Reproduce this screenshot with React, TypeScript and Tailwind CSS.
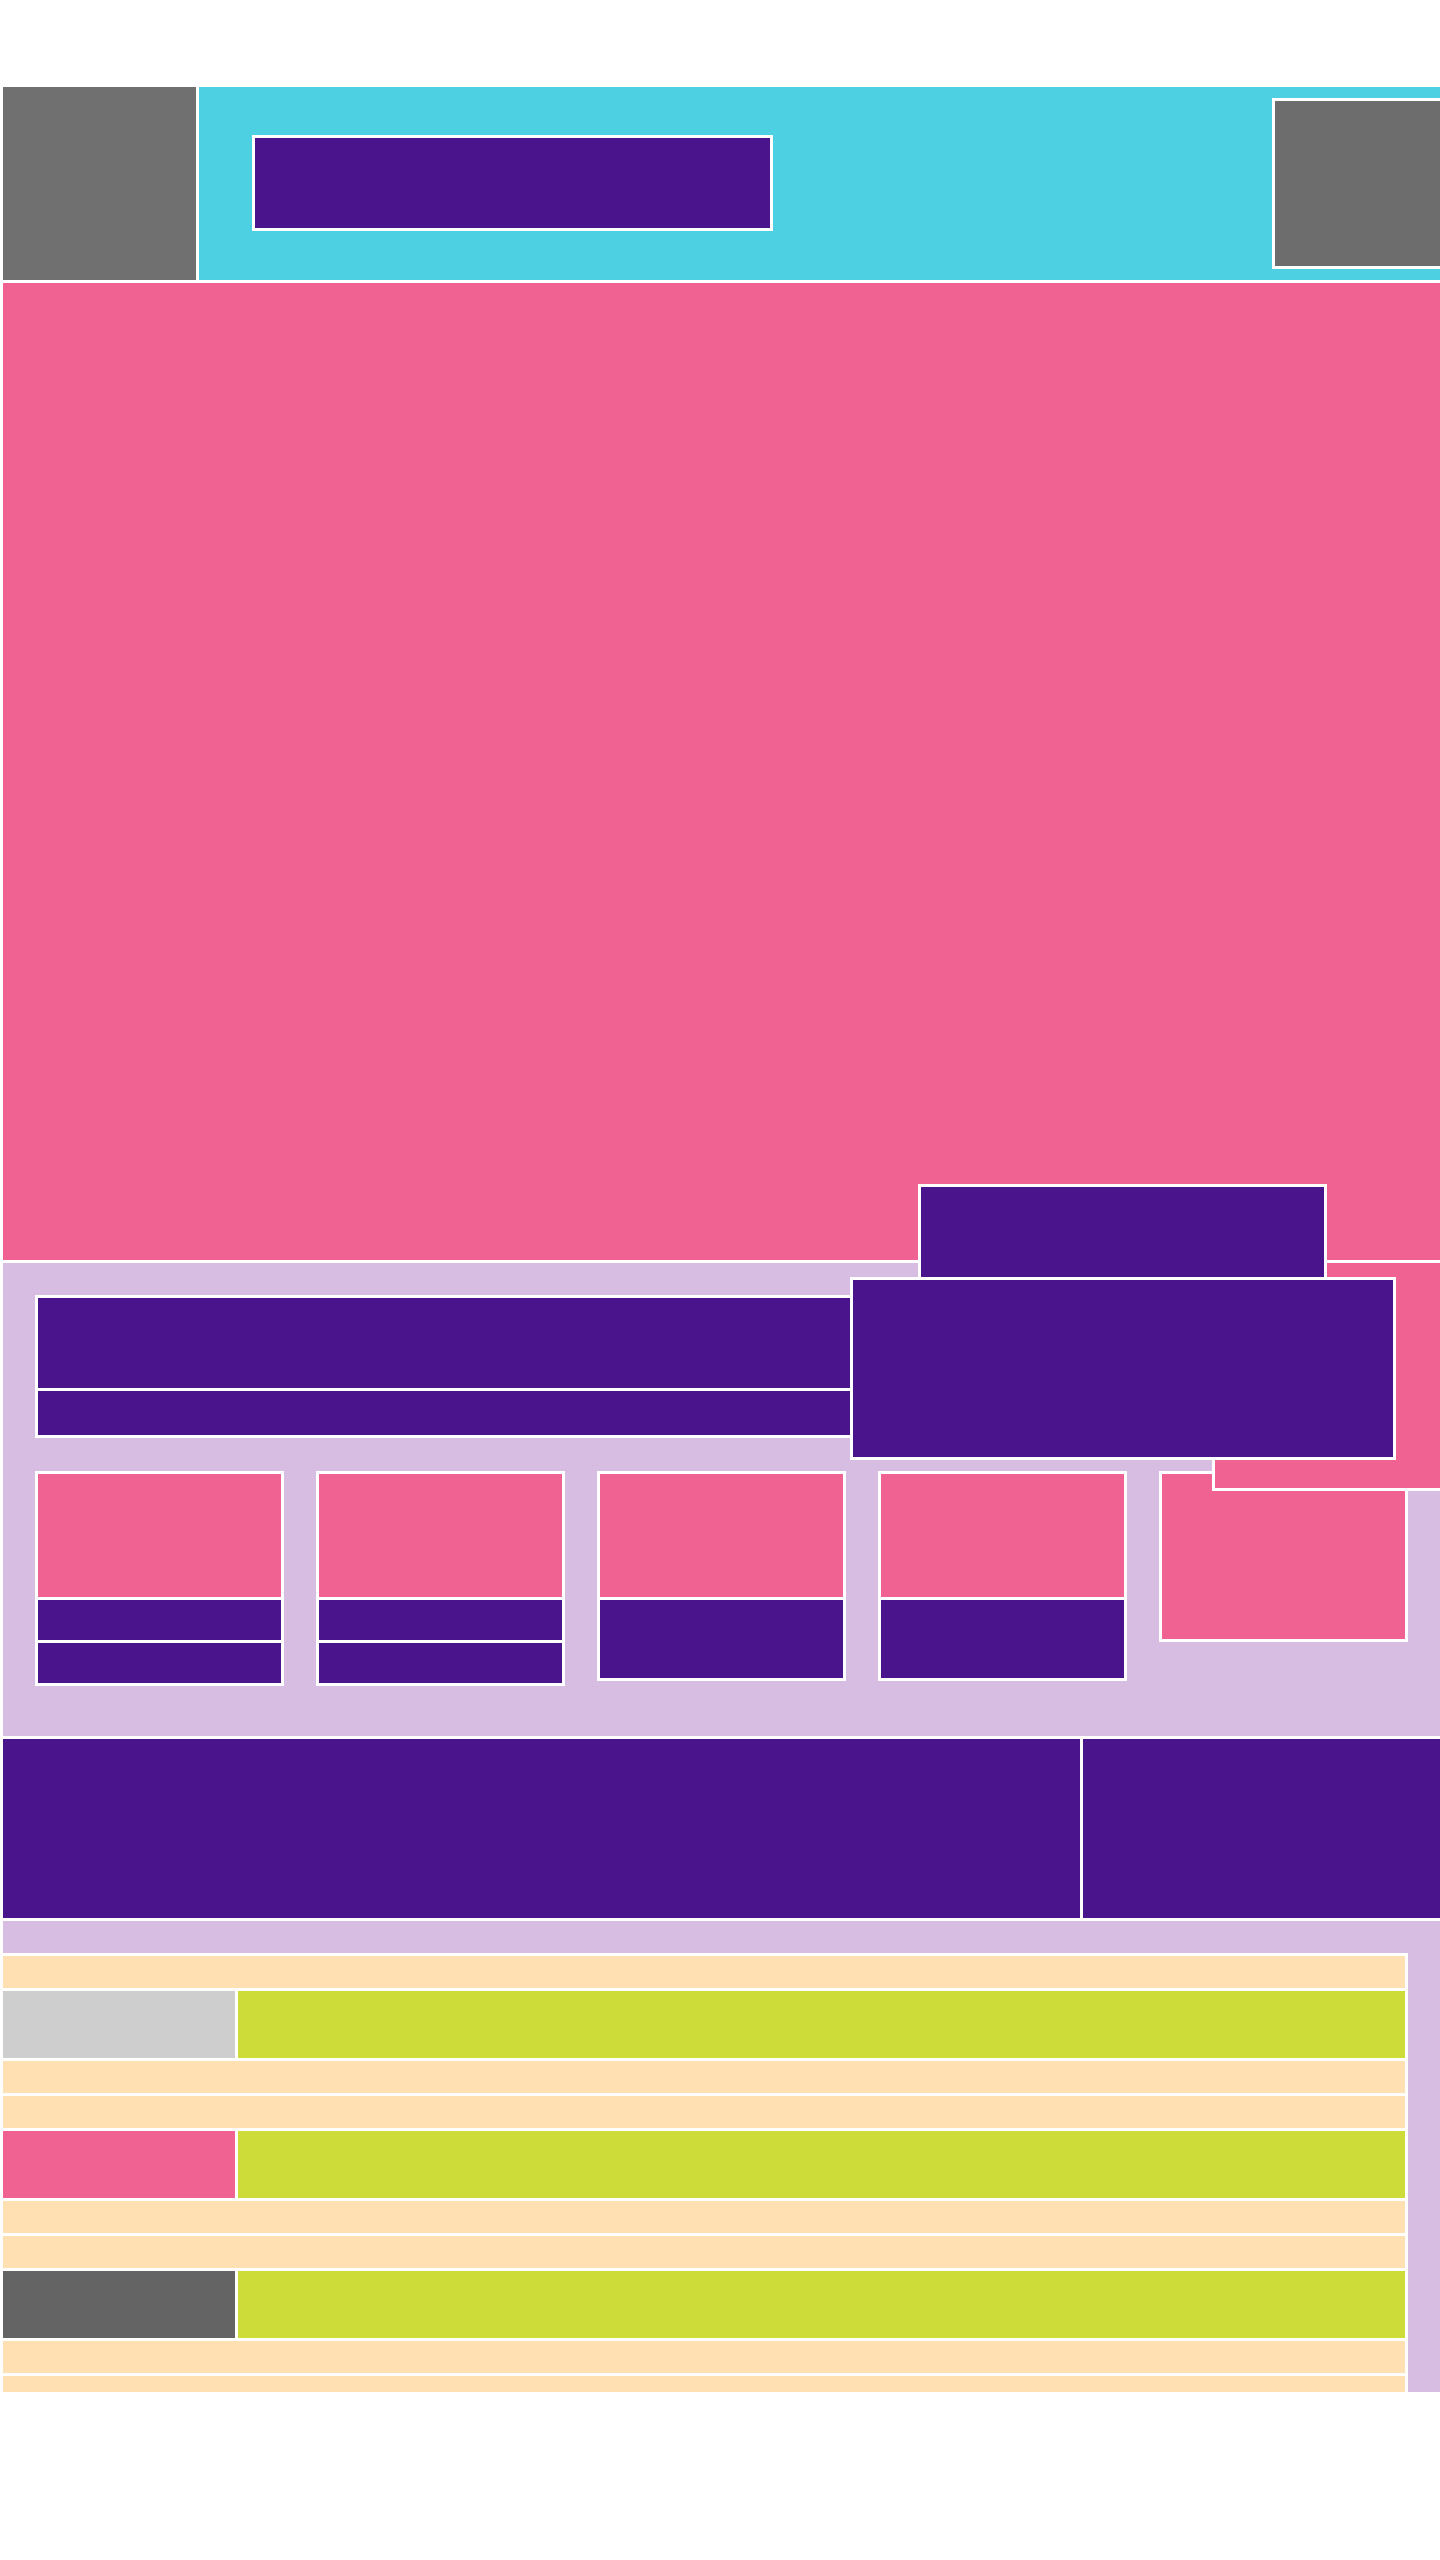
const edge = "shadow-[0_0_0_3px_#ffffff]";

const cards = [
  { id: "c1", bars: ["h-[40px]", "h-[40px]"], image: "h-[123px]" },
  { id: "c2", bars: ["h-[40px]", "h-[40px]"], image: "h-[123px]" },
  { id: "c3", bars: ["h-[78px]"], image: "h-[123px]" },
  { id: "c4", bars: ["h-[78px]"], image: "h-[123px]" },
  { id: "c5", bars: [], image: "h-[165px]" },
];

const groups = [
  { id: "g1", thumb: "bg-[#cecece]" },
  { id: "g2", thumb: "bg-[#f06292]" },
  { id: "g3", thumb: "bg-[#646464]" },
  { id: "g4", thumb: "bg-[#cecece]" },
];

function Card({ image, bars }: { image: string; bars: string[] }) {
  return (
    <div className={`flex w-[243px] flex-col gap-[3px] bg-[#4a148c] ${edge}`}>
      <div className={`${image} bg-[#f06292] ${edge}`} />
      {bars.map((h, i) => (
        <div key={i} className={`${h} bg-[#4a148c] ${edge}`} />
      ))}
    </div>
  );
}

function ListGroup({ thumb }: { thumb: string }) {
  return (
    <>
      <div className={`h-[32px] shrink-0 bg-[#ffe0b2] ${edge}`} />
      <div className="flex h-[67px] shrink-0 gap-[3px]">
        <div className={`w-[232px] ${thumb} ${edge}`} />
        <div className={`flex-1 bg-[#cddc39] ${edge}`} />
      </div>
      <div className={`h-[32px] shrink-0 bg-[#ffe0b2] ${edge}`} />
    </>
  );
}

export default function App() {
  return (
    <div className="relative h-[2560px] w-[1440px] overflow-hidden bg-white">
      <div className="flex flex-col gap-[3px] pl-[3px] pt-[87px]">
        {/* top bar */}
        <header className={`flex h-[193px] items-start bg-[#4dd0e1] ${edge}`}>
          <div className={`h-full w-[193px] shrink-0 bg-[#707070] ${edge}`} />
          <div className={`ml-[59px] mt-[51px] h-[90px] w-[515px] shrink-0 bg-[#4a148c] ${edge}`} />
          <div className={`ml-[505px] mt-[14px] h-[165px] w-[168px] shrink-0 bg-[#6d6d6d] ${edge}`} />
        </header>

        {/* hero */}
        <section className={`h-[977px] bg-[#f06292] ${edge}`} />

        {/* intro + cards */}
        <section className={`relative h-[473px] bg-[#d8bde2] pl-[35px] pt-[35px] ${edge}`}>
          <div className={`flex w-[900px] flex-col gap-[3px] bg-[#4a148c] ${edge}`}>
            <div className={`h-[90px] bg-[#4a148c] ${edge}`} />
            <div className={`h-[44px] bg-[#4a148c] ${edge}`} />
          </div>
          <div className="mt-[39px] flex items-start gap-[38px]">
            {cards.map((c) => (
              <Card key={c.id} image={c.image} bars={c.bars} />
            ))}
          </div>

          <div className={`absolute left-[1212px] top-0 h-[225px] w-[228px] bg-[#f06292] ${edge}`} />
          <div className={`absolute left-[918px] top-[-76px] h-[90px] w-[403px] bg-[#4a148c] ${edge}`} />
          <div className={`absolute left-[850px] top-[17px] h-[177px] w-[540px] bg-[#4a148c] ${edge}`} />
        </section>

        {/* banner */}
        <section className={`flex h-[179px] gap-[3px] bg-[#4a148c] ${edge}`}>
          <div className={`w-[1077px] bg-[#4a148c] ${edge}`} />
          <div className={`flex-1 bg-[#4a148c] ${edge}`} />
        </section>

        {/* list */}
        <section className={`h-[471px] bg-[#d8bde2] pt-[35px] ${edge}`}>
          <div className={`flex h-[436px] w-[1402px] flex-col gap-[3px] overflow-hidden bg-[#ffe0b2] ${edge}`}>
            {groups.map((g) => (
              <ListGroup key={g.id} thumb={g.thumb} />
            ))}
          </div>
        </section>
      </div>
    </div>
  );
}
